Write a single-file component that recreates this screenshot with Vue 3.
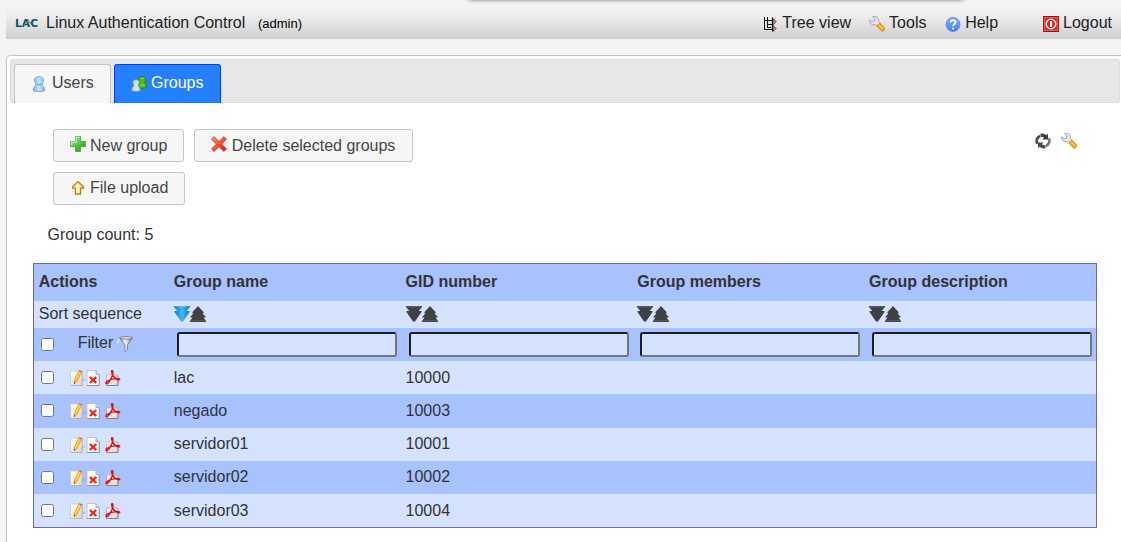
<script setup>
const menu = [
  { icon: 'tree', label: 'Tree view', cls: 'm-tree' },
  { icon: 'wrench', label: 'Tools', cls: 'm-tools' },
  { icon: 'help', label: 'Help', cls: 'm-help' },
  { icon: 'power', label: 'Logout', cls: 'm-logout' },
]
const columns = ['Group name', 'GID number', 'Group members', 'Group description']
const groups = [
  { name: 'lac', gid: 10000 },
  { name: 'negado', gid: 10003 },
  { name: 'servidor01', gid: 10001 },
  { name: 'servidor02', gid: 10002 },
  { name: 'servidor03', gid: 10004 },
]
</script>

<template>
  <div class="page">
    <svg class="defs" width="0" height="0">
      <defs>
        <linearGradient id="gBlue" x1="0" x2="1"><stop offset="0" stop-color="#78b2ee" /><stop offset=".5" stop-color="#c5e2ff" /><stop offset="1" stop-color="#81b7ee" /></linearGradient>
        <linearGradient id="gGreen" x1="0" y1="0" x2="1" y2="1"><stop offset="0" stop-color="#c5f1bd" /><stop offset=".45" stop-color="#5ecb50" /><stop offset="1" stop-color="#129410" /></linearGradient>
        <linearGradient id="gRed" x1="0" y1="0" x2="1" y2="1"><stop offset="0" stop-color="#ff9a80" /><stop offset="1" stop-color="#e81208" /></linearGradient>
        <linearGradient id="gHelp" x1="0" y1="0" x2="0" y2="1"><stop offset="0" stop-color="#86b1ff" /><stop offset="1" stop-color="#3b7cff" /></linearGradient>
        <linearGradient id="gSort" x1="0" x2="1"><stop offset="0" stop-color="#1478bd" /><stop offset=".5" stop-color="#42b5f8" /><stop offset="1" stop-color="#1677bc" /></linearGradient>
        <linearGradient id="gFunnel" x1="0" x2="1"><stop offset="0" stop-color="#85858f" /><stop offset=".45" stop-color="#f6f6f8" /><stop offset="1" stop-color="#6c6c78" /></linearGradient>
        <linearGradient id="gPaper" x1="0" y1="0" x2="1" y2="1"><stop offset="0" stop-color="#fff" /><stop offset="1" stop-color="#d5d5d2" /></linearGradient>
      </defs>
      <symbol id="tree" viewBox="0 0 16 16">
        <path d="M2.500 1v13M2 13.500h9M5.500 1v11M2.500 4.500h8M5.500 8.500h5M5 11.500h4" fill="none" stroke="#1a1a14" stroke-width="1" />
        <path d="M10.500 1.500v14" stroke="#111" stroke-width="1.200" />
        <path d="M11 2.500l3.500 3.200-3.500 3.300zM11 9.500l3.500 3-3.500 3z" fill="#b48672" stroke="#3e2a22" stroke-width=".5" />
      </symbol>
      <symbol id="wrench" viewBox="0 0 16 16">
        <path d="M.7 3.700L3.300 6 5.500 5 5.900 2.800 3.600.6C6.800-.5 10.300 1.600 9.600 5.300L11.300 7 8.200 10.200 6.200 8.700C3 9.500-.2 7 .7 3.700z" fill="#e3e4ee" stroke="#9496aa" stroke-width=".8" />
        <path d="M7.800 10l3-3 4.600 4.500c1.500 2-1.400 4.800-3.200 3.200z" fill="#ff9e0c" stroke="#c87511" stroke-width=".6" />
        <path d="M10 9l4 4" stroke="#ffd368" stroke-width="1.300" />
      </symbol>
      <symbol id="help" viewBox="0 0 16 16">
        <circle cx="8" cy="8.500" r="7" fill="url(#gHelp)" stroke="#568ced" stroke-width=".8" />
        <path d="M5.600 6.500C5.600 3.500 10.500 3.600 10.500 6.300c0 2-2.400 1.900-2.400 4" fill="none" stroke="#fff" stroke-width="1.700" />
        <circle cx="8.100" cy="12.600" r="1.050" fill="#fff" />
      </symbol>
      <symbol id="power" viewBox="0 0 16 16">
        <rect x=".5" y=".5" width="15" height="15" fill="#dc292a" stroke="#a30f12" />
        <rect x="1.500" y="1.500" width="13" height="13" fill="none" stroke="#ed7575" stroke-width=".7" />
        <circle cx="8" cy="8" r="4.700" fill="none" stroke="#fff" stroke-width="1.500" />
        <path d="M8 5v6" stroke="#fff" stroke-width="1.800" />
      </symbol>
      <symbol id="user" viewBox="0 0 16 16">
        <path d="M5.200 8C1.800 4.700 3.500.6 8 .6s6.200 4.100 2.800 7.400c.2 1.700 3 2.700 3 6 0 1.200-2.800 1.700-5.800 1.700s-5.800-.5-5.800-1.700c0-3.300 2.800-4.300 3-6z" fill="url(#gBlue)" stroke="#6d9fd4" stroke-width=".9" />
        <path d="M5.600 8.200q2.400 1.300 4.800 0" fill="none" stroke="#5a98d9" />
      </symbol>
      <symbol id="users" viewBox="0 0 16 16">
        <path d="M8.400 6C5.800 3 7.800.5 11 .5S16.200 3 13.800 6c.2 1.800 1.800 2.500 1.800 5 0 1.600-8.300 2-8.300 0 0-2.300 1-3.200 1.100-5z" fill="#4dbb10" stroke="#257b08" stroke-width=".9" />
        <path d="M10 2.500q2-1 2.500.5M9.500 9q2 1 4-.5" stroke="#9df250" fill="none" />
        <path d="M2.900 9C.5 6 2 3.700 4.900 3.700S9.500 6 7.300 9c.1 1.600 2 2.500 2 5 0 2-8.700 2-8.700 0 0-2.300 2.200-3.300 2.300-5z" fill="#c8e1f7" stroke="#5b91c3" stroke-width=".9" />
      </symbol>
      <symbol id="plus" viewBox="0 0 16 16">
        <path d="M5.500.5h5v5h5v5h-5v5h-5v-5h-5v-5h5z" fill="url(#gGreen)" stroke="#3dab36" stroke-width=".8" />
        <path d="M1.200 9V6.200h5v-5h3.400" fill="none" stroke="#d8f7d4" stroke-width=".8" />
      </symbol>
      <symbol id="cross" viewBox="0 0 16 16">
        <path d="M3 .7l5 4.900 5-4.900 2.400 2.500-4.800 4.900 4.800 4.800-2.400 2.500-5-4.900-5 4.900-2.400-2.500 4.800-4.800L.6 3.200z" fill="url(#gRed)" stroke="#c91c12" stroke-width=".8" />
      </symbol>
      <symbol id="upload" viewBox="0 0 16 16">
        <path d="M8 1.500l5.500 5.600v1H10.500v6h-5v-6h-3v-1z" fill="#fff1b1" stroke="#bd7900" stroke-width="1.200" />
        <path d="M7 5v8" stroke="#fffce4" />
      </symbol>
      <symbol id="refresh" viewBox="0 0 16 16">
        <path d="M2.300 10.800C.9 7.500 2.200 4.300 5 3" fill="none" stroke="#4a4a4a" stroke-width="2.800" />
        <path d="M13.700 5.200C15.100 8.500 13.800 11.700 11 13" fill="none" stroke="#777" stroke-width="2.800" />
        <path d="M5.500.5C8 .3 10 1 11.300 2.300L13 .8V6.500H7.500L9 4.700C8 3.900 6.700 3.500 5.500 3.700z" fill="#3f3f3f" />
        <path d="M10.500 15.500C8 15.700 6 15 4.700 13.700L3 15.200V9.500H8.500L7 11.300C8 12.100 9.300 12.500 10.500 12.300z" fill="#4a4a4a" />
      </symbol>
      <symbol id="down" viewBox="0 0 16 16">
        <path d="M0 0h16v1L13 4.500v.5H15.500v1L9 15.500H7L.5 6V5H3v-.5L0 1z" />
        <path d="M1 .8h14" stroke="#fff" stroke-opacity=".2" fill="none" />
      </symbol>
      <symbol id="up" viewBox="0 0 16 16">
        <path d="M8 0l5.500 6v1.500h-1L15.500 10.500v1H13.500L16 15v1H0v-1l2.500-3.500H.5v-1L3.500 7.500h-1V6z" />
        <path d="M1 14.800h14" stroke="#fff" stroke-opacity=".15" fill="none" />
      </symbol>
      <symbol id="funnel" viewBox="0 0 16 16">
        <path d="M.7 7.500C.5 5 1.500 3.500 3.500 2.500" fill="none" stroke="#e0e0e8" stroke-width="1.500" />
        <path d="M2.500 1.800h13L10.500 9v4.500L8 15.700V9z" fill="url(#gFunnel)" stroke="#74747e" stroke-width=".8" />
        <ellipse cx="9" cy="1.900" rx="6.600" ry="1.300" fill="#d9d9de" stroke="#777783" stroke-width=".8" />
      </symbol>
      <symbol id="edit" viewBox="0 0 16 16">
        <path d="M12 10l4-2-2 3-3 1z" fill="#7890bb" opacity=".45" />
        <rect x=".5" y="1" width="12" height="14.500" fill="url(#gPaper)" stroke="#c3c5c6" stroke-width=".7" />
        <path d="M12 1v14.500H.5" fill="none" stroke="#aaa" stroke-width=".7" />
        <path d="M4 10.500L8.600 1.100l3 1.200L7 11.600 4 14z" fill="#ffb21e" stroke="#d8931a" stroke-width=".5" />
        <path d="M5.500 10.500l4.300-8.800" stroke="#ffe177" />
        <path d="M8.600 1.100l1-.9 2.500 1-.5 1.100z" fill="#d85a43" /><path d="M4 12l1 .5L4 14z" fill="#333" />
      </symbol>
      <symbol id="remove" viewBox="0 0 16 16">
        <path d="M1 .5h9l3.300 4v11H1z" fill="#f9faf9" stroke="#b5bcc4" stroke-width=".8" />
        <path d="M10 .5v4h3.300" fill="#cfd6dc" stroke="#8e99a7" stroke-width=".7" /><path d="M13.300 5v10.500H1" fill="none" stroke="#777f87" stroke-width=".7" />
        <path d="M3.800 7l6.500 6M10.300 7l-6.500 6" stroke="#ee251c" stroke-width="2.300" />
      </symbol>
      <symbol id="pdf" viewBox="0 0 16 16">
        <path d="M1.500 5h11.500v10.500H1.500z" fill="url(#gPaper)" stroke="#c59a9a" stroke-width=".7" /><path d="M13 10v5.500H1.500" fill="none" stroke="#777" stroke-width=".8" />
        <path d="M6.200.6h1.300C8.600 3 7.600 5.800 6.200 8.400 4.800 11 3.200 13.800 1.500 13.800c-1.800-1 1.500-3.800 6-4.700 4-.8 7-.5 7.300.3-.7 1-4.500-.3-6.300-2.900C7 4.300 6.600 2.500 6.400.8" fill="none" stroke="#dd1015" stroke-width="1.400" />
      </symbol>
    </svg>

    <div class="popup-edge"></div>
    <header class="topbar">
      <svg class="logo" width="24" height="12" viewBox="0 0 24 12">
        <text x="0" y="10" textLength="23" lengthAdjust="spacingAndGlyphs">LAC</text>
        <path d="M8 9l6-6.500M12 2l4 5" />
      </svg>
      <span class="title">Linux Authentication Control</span>
      <span class="who">(admin)</span>
      <nav class="menu">
        <a v-for="m in menu" :key="m.label" :class="m.cls">
          <svg class="icon"><use :href="'#' + m.icon" /></svg><span>{{ m.label }}</span>
        </a>
      </nav>
    </header>

    <main class="panel">
      <div class="tabs">
        <div class="tab"><svg class="icon"><use href="#user" /></svg><span>Users</span></div>
        <div class="tab active"><svg class="icon"><use href="#users" /></svg><span>Groups</span></div>
      </div>

      <div class="toolbar">
        <div class="buttons">
          <button class="new"><svg class="icon"><use href="#plus" /></svg>New group</button>
          <button class="del"><svg class="icon"><use href="#cross" /></svg>Delete selected groups</button>
          <button class="upl"><svg class="icon"><use href="#upload" /></svg>File upload</button>
        </div>
        <div class="tools">
          <svg class="icon"><use href="#refresh" /></svg>
          <svg class="icon"><use href="#wrench" /></svg>
        </div>
      </div>

      <div class="count">Group count: 5</div>

      <div class="table">
        <div class="row head"><b>Actions</b><b v-for="c in columns" :key="c">{{ c }}</b></div>
        <div class="row sort">
          <span>Sort sequence</span>
          <span v-for="(c, i) in columns" :key="c" class="arrows">
            <svg class="icon" :class="{ on: i === 0 }"><use href="#down" /></svg><svg class="icon"><use href="#up" /></svg>
          </span>
        </div>
        <div class="row filter">
          <span class="actions"><input type="checkbox"><span class="flabel">Filter</span><svg class="icon"><use href="#funnel" /></svg></span>
          <span v-for="c in columns" :key="c" class="field"><input type="text"></span>
        </div>
        <div v-for="(g, i) in groups" :key="g.name" class="row data" :class="{ alt: i % 2 }">
          <span class="actions"><input type="checkbox"><svg class="icon"><use href="#edit" /></svg><svg class="icon"><use href="#remove" /></svg><svg class="icon pdf"><use href="#pdf" /></svg></span>
          <span>{{ g.name }}</span><span>{{ g.gid }}</span><span></span><span></span>
        </div>
      </div>
    </main>
  </div>
</template>

<style>
body { margin: 0; overflow: hidden; background: #f4f4f4; }
</style>

<style scoped>
* { box-sizing: border-box; }
.page { position: relative; width: 1121px; height: 542px; overflow: hidden; padding: 5px 0 0 6px; background: #f4f4f4; color: #333; font: 16px/20px "Liberation Sans", Arial, sans-serif; }
.defs { position: absolute; }
.icon { width: 16px; height: 16px; flex: none; display: block; }
.popup-edge { position: absolute; left: 468px; top: -10px; width: 496px; height: 10px; border-radius: 4px; box-shadow: 0 0 4px rgba(0, 0, 0, .5); }
.topbar { display: flex; align-items: center; height: 34px; padding: 1px 9px 0 9px; background: linear-gradient(#f4f4f4, #ececec 35%, #cfcfcf); color: #222; }
.logo { flex: none; margin-right: 7px; }
.logo text { font: bold 10px "DejaVu Sans", sans-serif; fill: #164b66; }
.logo path { fill: none; stroke: #3d9b62; stroke-width: 1; }
.title { white-space: nowrap; }
.who { margin: 2px 0 0 12.7px; font-size: 13px; color: #000; }
.menu { display: flex; margin-left: auto; }
.menu a { display: flex; align-items: center; gap: 4px; white-space: nowrap; }
.menu .icon { margin-top: 2px; }
.m-tools { margin-left: 18px; }
.m-help { margin-left: 18.7px; }
.m-logout { margin-left: 45px; }
.panel { height: 500px; width: 1120px; margin-top: 16px; border: 1px solid #c3c3c3; border-radius: 4px; background: #fff; padding: 3px; }
.tabs { display: flex; align-items: flex-end; gap: 3px; width: 1110px; height: 44px; padding: 0 3px; border: 1px solid #dcdcdc; border-radius: 3px; background: #e7e7e7; }
.tab { display: flex; gap: 5px; height: 39px; width: 97px; padding: 8px 0 0 16px; margin-bottom: -1px; border: 1px solid #c3c3c3; border-bottom: 0; border-radius: 3px 3px 0 0; background: #f6f6f6; color: #454545; }
.tab .icon { margin-top: 3px; }
.tab.active { width: 107px; gap: 4px; border-color: #003eff; background: #2480ff; color: #fff; }
.toolbar { display: flex; justify-content: space-between; padding: 26px 38px 0 43px; }
.buttons { display: flex; flex-wrap: wrap; gap: 10px; width: 400px; }
button { display: flex; align-items: center; gap: 4px; height: 33px; padding: 0 0 0 16px; border: 1px solid #c5c5c5; border-radius: 3px; background: #f6f6f6; color: #454545; font: inherit; white-space: nowrap; }
button .icon { margin-top: -3px; }
.new { width: 131px; }
.del { width: 219px; gap: 4.7px; }
.upl { width: 132px; padding-bottom: 2px; }
.upl .icon { margin-top: 0; }
.tools { display: flex; gap: 10px; padding: 4px 7px 0 0; }
.count { margin: 20px 0 0 37.500px; }
.table { width: 1064px; margin: 18px 0 0 23px; border: 1px solid #6a64c4; }
.row { display: grid; grid-template-columns: 135px repeat(4, 231.75px); align-items: center; height: 33.25px; background: #a8c1ff; }
.row > * { padding-left: 4.8px; }
.head { height: 37px; padding-bottom: 2px; }
.sort { height: 27px; background: #d5e2ff; padding-bottom: 1px; }
.filter { height: 33px; }
.data { background: #d5e2ff; }
.data.alt { background: #a8c1ff; }
.arrows { display: flex; fill: #3e4043; }
.arrows .on { fill: url(#gSort); }
.actions { display: flex; align-items: center; }
.row > .actions { padding-left: 7px; }
.actions input { margin: 0; width: 13px; height: 13px; flex: none; }
.data .actions .icon { margin-top: 1px; }
.data .actions > input { margin-right: 16px; }
.data .actions .pdf { margin-left: 3px; }
.filter .actions > input { margin-right: 23.7px; }
.flabel { margin-top: -4px; margin-right: 4px; }
.filter .actions .icon { margin-top: -2px; }
.row > .field { padding-left: 7.8px; }
.field input { display: block; width: 220px; height: 25px; padding: 0; border: 2px solid; border-color: #1e1e1e #767676 #767676 #1e1e1e; border-radius: 3px; background: #d5e2ff; }
</style>
